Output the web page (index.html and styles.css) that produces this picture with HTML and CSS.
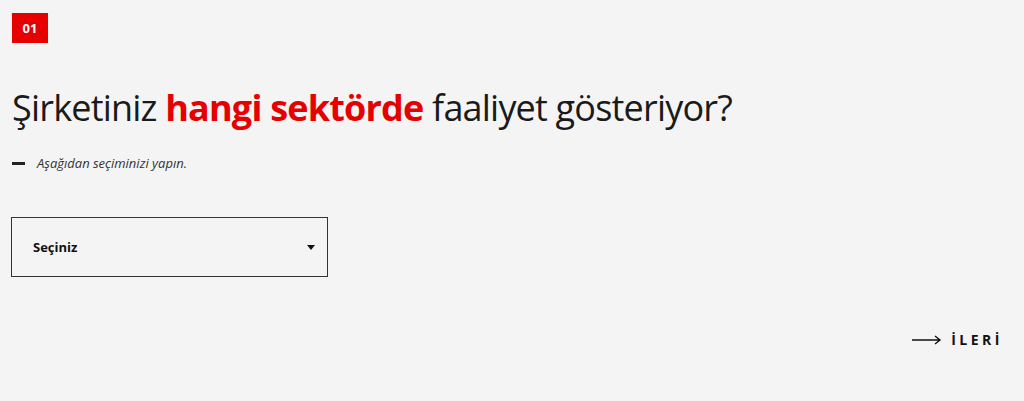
FILE: index.html
```html
<!DOCTYPE html>
<html lang="tr">
  <head>
    <title>Sektör Seçimi</title>
    <link rel="stylesheet" href="styles.css">
  </head>
  <body>
    <div class="step">
      <div class="step-no">01</div>

      <h1 class="question">Şirketiniz <strong>hangi sektörde</strong> faaliyet gösteriyor?</h1>

      <div class="hint">
        <span class="hint-dash"></span>
        <span class="hint-text">Aşağıdan seçiminizi yapın.</span>
      </div>

      <div class="select-box">
        <span class="select-label">Seçiniz</span>
        <span class="select-caret"></span>
      </div>

      <div class="nav">
        <a class="next" href="#">
          <svg class="next-arrow" width="30" height="10" viewBox="0 0 30 10">
            <path d="M0 5 H28 M23 1 L28 5 L23 9" fill="none" stroke="#111" stroke-width="1.4"/>
          </svg>
          <span class="next-text">İLERİ</span>
        </a>
      </div>
    </div>
  </body>
</html>
```

FILE: styles.css
```css
body {
  margin: 0;
  background-color: #f4f4f4;
  font-family: "Open Sans", Arial, sans-serif;
  color: #1a1a1a;
}

.step {
  padding: 13px 21px 0 12px;
}

.step-no {
  width: 36px;
  height: 30px;
  background-color: #e60000;
  color: white;
  font-size: 13px;
  font-weight: 700;
  line-height: 30px;
  text-align: center;
}

.question {
  margin: 41px 0 0 0;
  font-size: 36px;
  font-weight: 400;
  line-height: 48px;
  letter-spacing: -0.8px;
}

.question strong {
  color: #e60000;
  font-weight: 700;
}

.hint {
  display: flex;
  align-items: center;
  margin-top: 22px;
}

.hint-dash {
  width: 13px;
  height: 3px;
  background-color: #222;
  margin-right: 12px;
}

.hint-text {
  font-size: 13px;
  font-style: italic;
  color: #333;
}

.select-box {
  display: flex;
  align-items: center;
  justify-content: space-between;
  box-sizing: border-box;
  width: 317px;
  height: 60px;
  margin: 45px 0 0 -1px;
  padding: 0 12px 0 21px;
  border: 1px solid #333;
}

.select-label {
  font-size: 13px;
  font-weight: 700;
  color: #111;
}

.select-caret {
  width: 0;
  height: 0;
  border-left: 4px solid transparent;
  border-right: 4px solid transparent;
  border-top: 5px solid #111;
}

.nav {
  display: flex;
  justify-content: flex-end;
  margin-top: 53px;
}

.next {
  display: flex;
  align-items: center;
  gap: 9px;
  text-decoration: none;
  color: #111;
}

.next-text {
  font-size: 14px;
  font-weight: 700;
  letter-spacing: 3.5px;
}
```
